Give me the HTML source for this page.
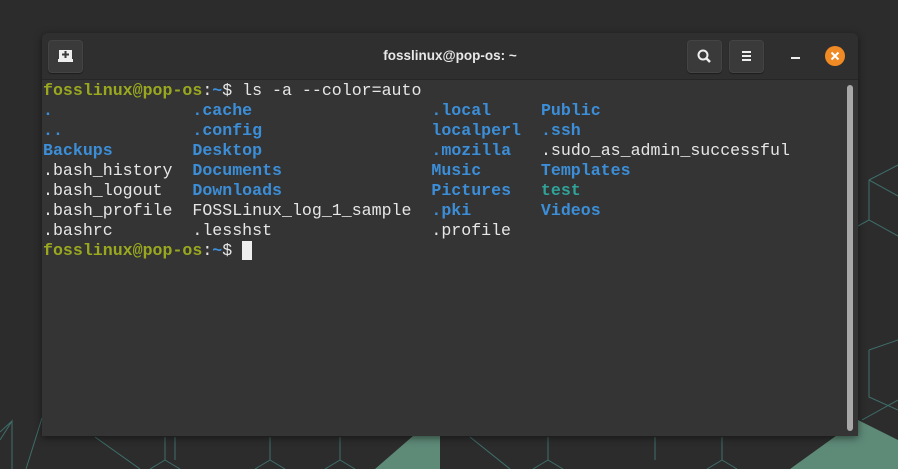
<!DOCTYPE html>
<html><head><style>
body{margin:0;width:898px;height:469px;background:#2c2c2c;overflow:hidden;position:relative;font-family:"Liberation Sans",sans-serif}
svg.bg{position:absolute;left:0;top:0}
.win{position:absolute;left:42px;top:33px;width:816px;height:403px;background:#333433;border-radius:6px 6px 0 0;box-shadow:0 2px 8px rgba(0,0,0,.5);overflow:hidden}
.tb{height:46px;background:#2f2f2f;border-bottom:1px solid #262626;position:relative}
.btn{position:absolute;top:7px;width:33px;height:31px;background:#3a3a3a;border-radius:4px;box-shadow:0 1px 1px rgba(0,0,0,.4);border:1px solid #444}
.title{position:absolute;left:0;right:0;top:15px;text-align:center;color:#e8e8e8;font-weight:bold;font-size:13.5px}
.term{position:absolute;left:1px;top:48px;font-family:"Liberation Mono",monospace;font-size:16.6px;line-height:20px;color:#e6e6e6;white-space:pre}
.g{color:#9aa81f;font-weight:bold}.b{color:#3c8ed8;font-weight:bold}.t{color:#2fa39a;font-weight:bold}
.sb{position:absolute;left:805px;top:52px;width:6px;height:346px;background:#a8a8a8;border-radius:3px}
</style></head><body>
<svg class="bg" width="898" height="469">
<g stroke="#3f6e6a" stroke-width="1" fill="none">
<path d="M0 432 L12 421 M0 440 L12 421 L12 469 M26 469 L42 418 M95 437 L140 469 M165 437 L165 460 L150 469 M165 460 L180 469 M175 437 V460 M270 460 L255 469 M270 437 V460 L285 469 M340 437 V460 L325 469 M340 460 L355 469 M470 437 L510 469 M548 437 V460 L533 469 M548 460 L563 469 M655 437 V460 M722 437 V460 L707 469 M722 460 L737 469 M869 180 L898 165 M869 180 L898 196 M869 180 V220 L898 236 M869 220 L858 226 M869 350 L898 340 M869 350 V397 L898 410 M862 420 L898 400"/>
</g>
<polygon points="375,469 413,436 440,436 440,469" fill="#5e8a78"/>
<polygon points="790,469 858,420 898,440 898,469" fill="#5e8a78"/>
</svg>
<div class="win">
<div class="tb">
<div class="btn" style="left:6px"><svg width="33" height="31"><rect x="10" y="9" width="13" height="9" fill="#eee"/><rect x="9" y="18" width="15" height="3" fill="#eee"/><path d="M16.5 10v7M13 13.5h7" stroke="#3a3a3a" stroke-width="2"/></svg></div>
<div class="title">fosslinux@pop-os: ~</div>
<div class="btn" style="left:645px"><svg width="33" height="31"><circle cx="15" cy="14" r="4.5" stroke="#eee" stroke-width="2" fill="none"/><path d="M18 17l4 4" stroke="#eee" stroke-width="2.5"/></svg></div>
<div class="btn" style="left:687px"><svg width="33" height="31"><path d="M12 11h9M12 15h9M12 19h9" stroke="#eee" stroke-width="2"/></svg></div>
<div style="position:absolute;left:749px;top:24px;width:9px;height:2px;background:#eee"></div>
<div style="position:absolute;left:783px;top:13px;width:20px;height:20px;border-radius:50%;background:#f08a24"><svg width="20" height="20"><path d="M6.5 6.5l7 7M13.5 6.5l-7 7" stroke="#fff" stroke-width="2"/></svg></div>
</div>
<div class="term"><span class="g">fosslinux@pop-os</span>:<span class="b">~</span>$ ls -a --color=auto
<span class="b">.</span>              <span class="b">.cache</span>                  <span class="b">.local</span>     <span class="b">Public</span>
<span class="b">..</span>             <span class="b">.config</span>                 <span class="b">localperl</span>  <span class="b">.ssh</span>
<span class="b">Backups</span>        <span class="b">Desktop</span>                 <span class="b">.mozilla</span>   .sudo_as_admin_successful
.bash_history  <span class="b">Documents</span>               <span class="b">Music</span>      <span class="b">Templates</span>
.bash_logout   <span class="b">Downloads</span>               <span class="b">Pictures</span>   <span class="t">test</span>
.bash_profile  FOSSLinux_log_1_sample  <span class="b">.pki</span>       <span class="b">Videos</span>
.bashrc        .lesshst                .profile
<span class="g">fosslinux@pop-os</span>:<span class="b">~</span>$ <span style="background:#eee"> </span></div>
<div class="sb"></div>
</div>
</body></html>
